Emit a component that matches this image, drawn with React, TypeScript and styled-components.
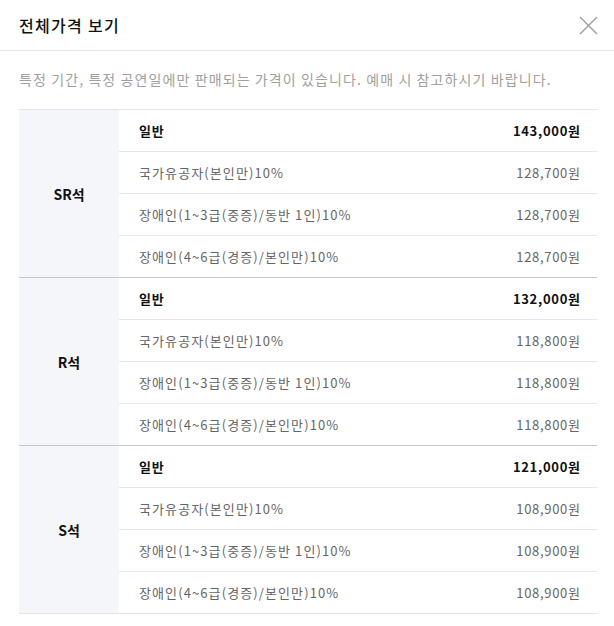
import React from "react";
import styled, { createGlobalStyle } from "styled-components";

const Global = createGlobalStyle`
  html, body { margin: 0; padding: 0; background: #fff; }
  body { font-family: "Noto Sans CJK KR", "Noto Sans", sans-serif; color: #111; }
  * { box-sizing: border-box; }
`;

const Modal = styled.div`
  width: 614px;
  background: #fff;
`;

const Header = styled.header`
  height: 51px;
  border-bottom: 1px solid #e3e6ec;
  display: flex;
  align-items: center;
  justify-content: space-between;
  padding: 0 16px 0 19px;
`;

const Title = styled.h2`
  margin: 0;
  font-size: 16px;
  font-weight: 500;
  color: #111;
  letter-spacing: 1.3px;
`;

const CloseButton = styled.button`
  width: 20px;
  height: 20px;
  padding: 0;
  border: 0;
  background: none;
  display: flex;
  align-items: center;
  justify-content: center;
  cursor: pointer;
`;

const Body = styled.div`
  padding: 0 17px 0 19px;
`;

const Notice = styled.p`
  margin: 0;
  padding: 18px 0 20px;
  font-size: 14px;
  line-height: 20px;
  color: #a0a0a0;
  letter-spacing: 1.1px;
  white-space: nowrap;
`;

const Table = styled.div`
  border-top: 1px solid #e3e5ec;
`;

const Group = styled.div<{ $last?: boolean }>`
  display: grid;
  grid-template-columns: 100px 1fr;
  border-bottom: 1px solid ${(p) => (p.$last ? "#e1e2ea" : "#c6c8ce")};
`;

const SeatCell = styled.div`
  background: #f5f6fa;
  display: flex;
  align-items: center;
  justify-content: center;
  font-size: 14px;
  font-weight: 700;
  color: #111;
`;

const Rows = styled.div`
  display: flex;
  flex-direction: column;
`;

const Row = styled.div<{ $divider?: boolean }>`
  height: ${(p) => (p.$divider ? 42 : 41)}px;
  display: flex;
  align-items: center;
  justify-content: space-between;
  padding: 0 17px 0 20px;
  border-bottom: ${(p) => (p.$divider ? "1px solid #e6e7ee" : "0")};
`;

const Label = styled.span<{ $main?: boolean }>`
  font-size: 13px;
  letter-spacing: ${(p) => (p.$main ? "0.8px" : "1.1px")};
  color: ${(p) => (p.$main ? "#111" : "#666")};
  font-weight: ${(p) => (p.$main ? 700 : 400)};
`;

const Price = styled.span<{ $main?: boolean }>`
  font-size: 13px;
  letter-spacing: 0.7px;
  margin-right: -0.7px;
  color: ${(p) => (p.$main ? "#111" : "#666")};
  font-weight: ${(p) => (p.$main ? 700 : 400)};
`;

const groups = [
  { seat: "SR석", prices: ["143,000원", "128,700원", "128,700원", "128,700원"] },
  { seat: "R석", prices: ["132,000원", "118,800원", "118,800원", "118,800원"] },
  { seat: "S석", prices: ["121,000원", "108,900원", "108,900원", "108,900원"] },
];

const labels = [
  "일반",
  "국가유공자(본인만)10%",
  "장애인(1~3급(중증)/동반 1인)10%",
  "장애인(4~6급(경증)/본인만)10%",
];

export default function App() {
  return (
    <Modal>
      <Global />
      <Header>
        <Title>전체가격 보기</Title>
        <CloseButton aria-label="닫기">
          <svg width="19" height="19" viewBox="0 0 19 19">
            <path d="M1 1 L18 18 M18 1 L1 18" stroke="#9a9a9a" strokeWidth="1.3" fill="none" />
          </svg>
        </CloseButton>
      </Header>
      <Body>
        <Notice>특정 기간, 특정 공연일에만 판매되는 가격이 있습니다. 예매 시 참고하시기 바랍니다.</Notice>
        <Table>
          {groups.map((g, gi) => (
            <Group key={g.seat} $last={gi === groups.length - 1}>
              <SeatCell>{g.seat}</SeatCell>
              <Rows>
                {labels.map((l, i) => (
                  <Row key={l} $divider={i < labels.length - 1}>
                    <Label $main={i === 0}>{l}</Label>
                    <Price $main={i === 0}>{g.prices[i]}</Price>
                  </Row>
                ))}
              </Rows>
            </Group>
          ))}
        </Table>
      </Body>
    </Modal>
  );
}
